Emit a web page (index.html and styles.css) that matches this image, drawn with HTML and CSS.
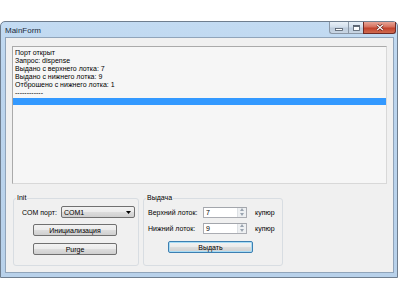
FILE: index.html
```html
<!DOCTYPE html>
<html lang="ru">
<head>
    <meta charset="UTF-8">
    <title>MainForm</title>
    <link rel="stylesheet" href="styles.css">
</head>
<body>
    <div class="window">
        <div class="titlebar">
            <span class="title">MainForm</span>
            <div class="caption-buttons">
                <div class="cap-group">
                    <div class="cap-btn cap-min">
                        <svg width="8" height="6" viewBox="0 0 8 6"><rect x="0.5" y="3.5" width="7" height="2" fill="#fff" stroke="#4f5966" stroke-width="0.8"/></svg>
                    </div>
                    <div class="cap-btn cap-max">
                        <svg width="7" height="6" viewBox="0 0 7 6"><rect x="0.5" y="0.5" width="6" height="5" fill="#fff" stroke="#4f5966" stroke-width="0.8"/><rect x="0.5" y="0.5" width="6" height="1.4" fill="#4f5966"/></svg>
                    </div>
                </div>
                <div class="cap-close">
                    <svg width="8" height="7" viewBox="0 0 8 7"><path d="M1.2 1 L6.8 6 M6.8 1 L1.2 6" stroke="#5a1a14" stroke-width="2.4"/><path d="M1.2 1 L6.8 6 M6.8 1 L1.2 6" stroke="#fff" stroke-width="1.2"/></svg>
                </div>
            </div>
        </div>
        <div class="client">
            <div class="log">
                <div class="log-line">Порт открыт</div>
                <div class="log-line">Запрос: dispense</div>
                <div class="log-line">Выдано с верхнего лотка: 7</div>
                <div class="log-line">Выдано с нижнего лотка: 9</div>
                <div class="log-line">Отброшено с нижнего лотка: 1</div>
                <div class="log-line">------------</div>
                <div class="log-line selected"></div>
            </div>
            <div class="groups">
                <fieldset class="group group-init">
                    <legend>Init</legend>
                    <div class="row">
                        <span class="label com-label">COM порт:</span>
                        <div class="combo">
                            <span>COM1</span>
                            <svg width="5" height="3" viewBox="0 0 5 3"><path d="M0 0 H5 L2.5 3 Z" fill="#000"/></svg>
                        </div>
                    </div>
                    <button class="btn init-btn">Инициализация</button>
                    <button class="btn init-btn purge">Purge</button>
                </fieldset>
                <fieldset class="group group-out">
                    <legend>Выдача</legend>
                    <div class="row">
                        <span class="label out-label">Верхний лоток:</span>
                        <div class="spin">
                            <span class="spin-value">7</span>
                            <div class="spin-arrows">
                                <svg width="4" height="3" viewBox="0 0 4 3"><path d="M0 3 L2 0 L4 3 Z" fill="#9aa4b0"/></svg>
                                <svg width="4" height="3" viewBox="0 0 4 3"><path d="M0 0 L2 3 L4 0 Z" fill="#9aa4b0"/></svg>
                            </div>
                        </div>
                        <span class="label unit">купюр</span>
                    </div>
                    <div class="row row-second">
                        <span class="label out-label">Нижний лоток:</span>
                        <div class="spin">
                            <span class="spin-value">9</span>
                            <div class="spin-arrows">
                                <svg width="4" height="3" viewBox="0 0 4 3"><path d="M0 3 L2 0 L4 3 Z" fill="#9aa4b0"/></svg>
                                <svg width="4" height="3" viewBox="0 0 4 3"><path d="M0 0 L2 3 L4 0 Z" fill="#9aa4b0"/></svg>
                            </div>
                        </div>
                        <span class="label unit">купюр</span>
                    </div>
                    <button class="btn btn-default">Выдать</button>
                </fieldset>
            </div>
        </div>
    </div>
</body>
</html>
```

FILE: styles.css
```css
body {
    margin: 0;
    padding: 21px 0 0 0;
    background: #ffffff;
    font-family: "Liberation Sans", Arial, sans-serif;
    font-size: 7px;
    color: #000;
}
.window {
    width: 398px;
    height: 257px;
    box-sizing: border-box;
    border: 1px solid #6f7e8f;
    border-radius: 5px 5px 0 0;
    background: linear-gradient(180deg, #c3dbf2 0%, #bcd5ee 20%, #b8d1ea 100%);
    display: flex;
    flex-direction: column;
}
.titlebar {
    height: 15px;
    display: flex;
    justify-content: space-between;
    align-items: flex-start;
}
.title {
    font-size: 8px;
    padding: 4px 0 0 4px;
    color: #1a2a3c;
}
.caption-buttons {
    display: flex;
    margin-right: 1px;
}
.cap-group {
    display: flex;
    border: 1px solid #8a97a6;
    border-top: none;
    border-right: none;
    border-radius: 0 0 0 3px;
    background: linear-gradient(180deg, #e9f0f8 0%, #d3dfec 45%, #bccbdc 55%, #c9d6e4 100%);
}
.cap-btn {
    height: 11px;
    display: flex;
    align-items: center;
    justify-content: center;
}
.cap-min {
    width: 18px;
}
.cap-max {
    width: 14px;
    border-left: 1px solid #8a97a6;
}
.cap-close {
    width: 31px;
    height: 11px;
    border: 1px solid #6e2a26;
    border-top: none;
    border-radius: 0 0 3px 0;
    background: linear-gradient(180deg, #e8a597 0%, #d5705d 45%, #c2422c 55%, #cf6a4f 100%);
    display: flex;
    align-items: center;
    justify-content: center;
}
.client {
    flex: 1;
    margin: 0 3px 4px 4px;
    border: 1px solid #90a4ba;
    background: #f0f0f0;
    padding: 8px 6px 0 6px;
}
.log {
    height: 138px;
    box-sizing: border-box;
    border: 1px solid #aaaaaa;
    border-right-color: #d8d8d8;
    border-bottom-color: #d8d8d8;
    background: #f6f6f6;
    padding: 2px 0 0 0;
}
.log-line {
    height: 8px;
    line-height: 8px;
    padding-left: 2px;
    white-space: nowrap;
}
.selected {
    background: #3399ff;
    height: 7px;
    margin-top: 1px;
}
.groups {
    display: flex;
    gap: 4px;
    margin: 10px 0 0 1px;
}
.group {
    margin: 0;
    padding: 0;
    height: 72px;
    box-sizing: border-box;
    border: 1px solid #d8dde2;
    border-radius: 3px;
    min-width: 0;
}
.group legend {
    padding: 0 1px;
    margin-left: 2px;
    line-height: 8px;
    color: #000;
}
.group-init {
    width: 126px;
}
.group-out {
    width: 140px;
}
.row {
    display: flex;
    align-items: center;
    margin-top: 4px;
    height: 12px;
}
.label {
    white-space: nowrap;
}
.com-label {
    width: 39px;
    padding-left: 8px;
}
.combo {
    width: 74px;
    height: 12px;
    box-sizing: border-box;
    border: 1px solid #707070;
    border-radius: 2px;
    background: linear-gradient(180deg, #f2f2f2 0%, #ebebeb 50%, #dddddd 51%, #cfcfcf 100%);
    display: flex;
    align-items: center;
    justify-content: space-between;
    padding: 0 3px 0 2px;
}
.btn {
    display: block;
    font-family: inherit;
    font-size: 7px;
    height: 12px;
    padding: 0;
    box-sizing: border-box;
    border: 1px solid #707070;
    border-radius: 2px;
    background: linear-gradient(180deg, #f2f2f2 0%, #ebebeb 50%, #dddddd 51%, #cfcfcf 100%);
    color: #000;
}
.init-btn {
    width: 84px;
    margin: 6px 0 0 19px;
}
.purge {
    margin-top: 7px;
}
.out-label {
    width: 55px;
    padding-left: 4px;
}
.spin {
    width: 44px;
    height: 11px;
    box-sizing: border-box;
    border: 1px solid #abadb3;
    border-top-color: #a3a6ac;
    background: #ffffff;
    display: flex;
    justify-content: space-between;
}
.spin-value {
    padding-left: 2px;
    line-height: 9px;
}
.spin-arrows {
    width: 8px;
    display: flex;
    flex-direction: column;
    align-items: center;
    justify-content: space-around;
    background: #eef0f2;
    border-left: 1px solid #dde1e5;
}
.unit {
    margin-left: 8px;
}
.row-second {
    margin-top: 4px;
}
.btn-default {
    width: 85px;
    margin: 7px 0 0 24px;
    border-color: #3c7fb1;
    box-shadow: inset 0 0 0 1px #a8dcf5;
}
```
